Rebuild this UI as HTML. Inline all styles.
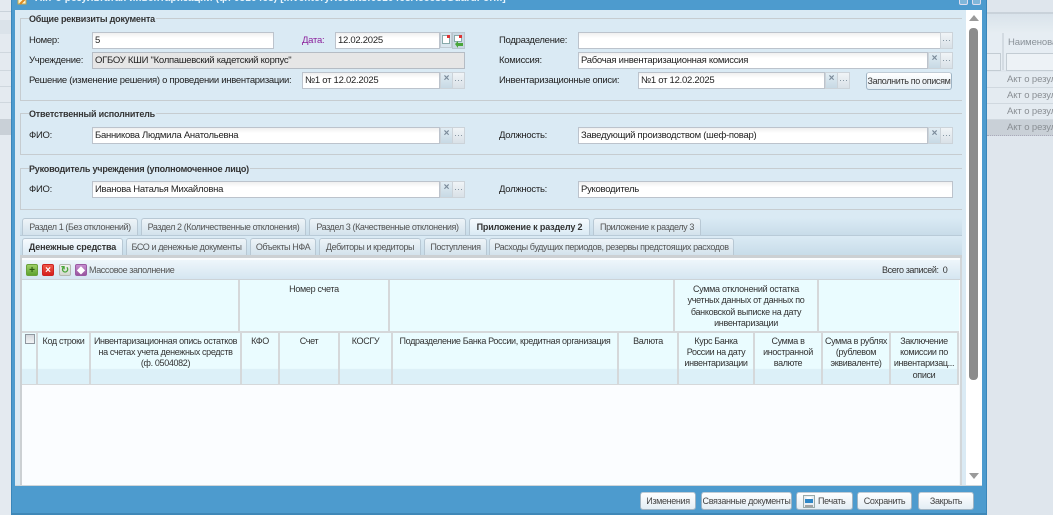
<!DOCTYPE html>
<html lang="ru"><head><meta charset="utf-8"><title>Акт</title>
<style>
html,body{margin:0;padding:0}
body{width:1053px;height:515px;overflow:hidden;position:relative;background:#dfe6ed;font:9.5px "Liberation Sans",sans-serif;letter-spacing:-.27px;color:#222}
.a{position:absolute;box-sizing:border-box}
.t{position:absolute;white-space:nowrap;line-height:12px}
.fs{position:absolute;box-sizing:border-box;border:1px solid #c6ccd0;left:20px;width:943px}
.lg{position:absolute;left:29px;font-weight:bold;white-space:nowrap;background:#daeaf4;padding-right:1px;line-height:12px;color:#333;font-size:9px;letter-spacing:-.2px}
.i{position:absolute;box-sizing:border-box;background:linear-gradient(#f0f0f0,#fff 5px);border:1px solid #bcc3cc;padding-left:2px;line-height:16px;height:17px;white-space:nowrap;color:#222}
.x,.d{position:absolute;box-sizing:border-box;height:17px;width:13px;border:1px solid #ccd3d9;text-align:center;line-height:12px;font-size:10px;color:#7a8a99;letter-spacing:0}
.x{background:linear-gradient(#e2edf4,#c7d9e5);font-weight:bold}
.d{background:linear-gradient(#f0f4f7,#d9e1e8);font-size:9px;line-height:14px}
.tab{position:absolute;box-sizing:border-box;height:17px;border:1px solid #b8c8d4;border-bottom:0;border-radius:3px 3px 0 0;background:linear-gradient(#eef4f8,#d3e2ec);text-align:center;line-height:16px;color:#555;white-space:nowrap;font-size:9px;letter-spacing:-.4px}
.on{background:linear-gradient(#f6fbfe,#daeaf4);font-weight:bold;color:#333;letter-spacing:-.15px}
.btn{position:absolute;box-sizing:border-box;top:492px;height:18px;border:1px solid #9fb4c4;border-top-color:#c0ccd6;border-radius:3px;background:linear-gradient(#fff,#e3edf4);text-align:center;line-height:16px;color:#444;white-space:nowrap;font-size:9px;letter-spacing:-.35px}
.h{position:absolute;box-sizing:border-box;top:333px;height:52px;border-right:2px solid #d5d8da;background:linear-gradient(#eafcff 68%,#dcf0f8 70%);text-align:center;line-height:11.2px;padding:3px 0 0;color:#333;white-space:nowrap;font-size:9px;letter-spacing:-.35px}
.g{position:absolute;box-sizing:border-box;top:280px;height:52px;border-right:2px solid #d5d8da;background:#eafcff;text-align:center;line-height:11.4px;padding-top:4px;color:#333;white-space:nowrap;font-size:9px;letter-spacing:-.3px}
.ic{position:absolute;top:264px;width:12px;height:12px;border-radius:2px;box-sizing:border-box;color:#fff;text-align:center;line-height:11px;font-size:10px;font-weight:bold;letter-spacing:0}
.r{position:absolute;left:987px;width:66px;height:16px;border-bottom:1px solid #d0d8df;background:#e4ebf1;color:#8a8f94;padding:2px 0 0 20px;box-sizing:border-box;white-space:nowrap;line-height:12px;letter-spacing:-.1px}
</style></head><body>

<!-- backdrop left -->
<div class="a" style="left:0;top:0;width:11px;height:515px;background:#e4eaf0"></div>
<div class="a" style="left:0;top:11px;width:11px;height:1px;background:#c9d2da"></div>
<div class="a" style="left:0;top:20px;width:11px;height:14px;background:#dbe3ea"></div>
<div class="a" style="left:0;top:52px;width:11px;height:1px;background:#cfd7de"></div>
<div class="a" style="left:0;top:70px;width:11px;height:1px;background:#cfd7de"></div>
<div class="a" style="left:0;top:86px;width:11px;height:1px;background:#cfd7de"></div>
<div class="a" style="left:0;top:102px;width:11px;height:1px;background:#cfd7de"></div>
<div class="a" style="left:0;top:119px;width:11px;height:16px;background:#c9d0d7"></div>

<!-- backdrop right -->
<div class="a" style="left:987px;top:12px;width:66px;height:2px;background:#c9d2da"></div>
<div class="a" style="left:987px;top:14px;width:66px;height:19px;background:linear-gradient(#d9e3eb,#e6edf2)"></div>
<div class="a" style="left:987px;top:33px;width:66px;height:37px;background:#e6edf3"></div>
<div class="a" style="left:1002px;top:33px;width:2px;height:37px;background:#d3dbe2"></div>
<div class="t" style="left:1008px;top:37px;color:#8a9299;letter-spacing:-.1px">Наименован</div>
<div class="a" style="left:987px;top:53px;width:14px;height:18px;border:1px solid #c3ccd3;border-left:0;background:#e8eef3"></div>
<div class="a" style="left:1006px;top:53px;width:47px;height:18px;border:1px solid #c3ccd3;border-right:0;background:#edf2f6"></div>
<div class="r" style="top:72px">Акт о резул</div>
<div class="r" style="top:88px">Акт о резул</div>
<div class="r" style="top:104px">Акт о резул</div>
<div class="r" style="top:120px;background:#c9d0d7;border-bottom:1px dotted #aab">Акт о резул</div>

<!-- window -->
<div class="a" style="left:11px;top:0;width:976px;height:515px;background:#4d9bce;border-left:1px solid #3a86ba;border-right:1px solid #3a86ba"></div>
<div class="a" style="left:15px;top:10px;width:967px;height:475px;background:#daeaf4"></div>
<div class="a" style="left:966px;top:10px;width:16px;height:475px;background:#fff"></div>
<div class="a" style="left:15px;top:485px;width:967px;height:1px;background:#d0d6da"></div>
<div class="a" style="left:12px;top:513px;width:974px;height:2px;background:#3f88b8"></div>

<!-- title -->
<svg class="a" style="left:17px;top:0" width="11" height="6"><rect x="1" y="-6" width="8" height="10" fill="#fff6d0" stroke="#c9a648"/><path d="M3 4L9-2" stroke="#e08a20" stroke-width="2"/></svg>
<div class="t" style="left:35px;top:-7px;font-weight:bold;color:#e9f4fb;font-size:10px;letter-spacing:.15px">Акт о результатах инвентаризации (ф. 0510463) [InventoryResultsf0510463AccessGuardForm]</div>
<div class="a" style="left:959px;top:-4px;width:9px;height:9px;border:1px solid #dde;border-radius:2px;background:#7fb6da"></div>
<div class="a" style="left:972px;top:-4px;width:9px;height:9px;border:1px solid #dde;border-radius:2px;background:#7fb6da"></div>

<!-- fieldsets -->
<div class="fs" style="top:18px;height:83px"></div>
<div class="lg" style="top:13px">Общие реквизиты документа</div>
<div class="fs" style="top:113px;height:42px"></div>
<div class="lg" style="top:108px">Ответственный исполнитель</div>
<div class="fs" style="top:168px;height:42px"></div>
<div class="lg" style="top:163px">Руководитель учреждения (уполномоченное лицо)</div>

<!-- block 1 -->
<div class="t" style="left:29px;top:35px">Номер:</div>
<div class="i" style="left:92px;top:32px;width:182px">5</div>
<div class="t" style="left:302px;top:35px;color:#8b1f9b">Дата:</div>
<div class="i" style="left:335px;top:32px;width:105px">12.02.2025</div>
<svg class="a" style="left:440px;top:32px" width="25" height="17"><rect x=".5" y=".5" width="11" height="15" fill="#d9e6ee" stroke="#c0cbd3"/><rect x="2.500" y="3.500" width="7" height="8" fill="#fff" stroke="#8aa"/><rect x="7" y="3" width="3" height="3" fill="#d33"/><rect x="12.500" y=".5" width="12" height="16" fill="#c9d8e2" stroke="#b8c5ce"/><rect x="14.500" y="3.500" width="7" height="6" fill="#fff" stroke="#8aa"/><rect x="19" y="3" width="3" height="3" fill="#d33"/><path d="M15 12l3-3v2h5v3h-5v2z" fill="#4aa63a"/></svg>

<div class="t" style="left:29px;top:55px">Учреждение:</div>
<div class="i" style="left:92px;top:52px;width:373px;background:#e6e6e6;border-color:#b5bcc4">ОГБОУ КШИ "Колпашевский кадетский корпус"</div>

<div class="t" style="left:29px;top:75px;letter-spacing:-.29px">Решение (изменение решения) о проведении инвентаризации:</div>
<div class="i" style="left:302px;top:72px;width:138px">№1 от 12.02.2025</div>
<div class="x" style="left:440px;top:72px">×</div><div class="d" style="left:452px;top:72px">···</div>

<div class="t" style="left:499px;top:35px">Подразделение:</div>
<div class="i" style="left:578px;top:32px;width:363px"></div>
<div class="d" style="left:940px;top:32px">···</div>

<div class="t" style="left:499px;top:55px">Комиссия:</div>
<div class="i" style="left:578px;top:52px;width:350px">Рабочая инвентаризационная комиссия</div>
<div class="x" style="left:928px;top:52px">×</div><div class="d" style="left:940px;top:52px">···</div>

<div class="t" style="left:499px;top:75px">Инвентаризационные описи:</div>
<div class="i" style="left:638px;top:72px;width:187px">№1 от 12.02.2025</div>
<div class="x" style="left:825px;top:72px">×</div><div class="d" style="left:837px;top:72px">···</div>
<div class="btn" style="left:866px;top:72px;width:86px;height:18px;color:#333;letter-spacing:-.35px">Заполнить по описям</div>

<!-- block 2 -->
<div class="t" style="left:29px;top:130px">ФИО:</div>
<div class="i" style="left:92px;top:127px;width:348px">Банникова Людмила Анатольевна</div>
<div class="x" style="left:440px;top:127px">×</div><div class="d" style="left:452px;top:127px">···</div>
<div class="t" style="left:499px;top:130px">Должность:</div>
<div class="i" style="left:578px;top:127px;width:350px">Заведующий производством (шеф-повар)</div>
<div class="x" style="left:928px;top:127px">×</div><div class="d" style="left:940px;top:127px">···</div>

<!-- block 3 -->
<div class="t" style="left:29px;top:184px">ФИО:</div>
<div class="i" style="left:92px;top:181px;width:348px">Иванова Наталья Михайловна</div>
<div class="x" style="left:440px;top:181px">×</div><div class="d" style="left:452px;top:181px">···</div>
<div class="t" style="left:499px;top:184px">Должность:</div>
<div class="i" style="left:578px;top:181px;width:375px">Руководитель</div>

<!-- tabs -->
<div class="a" style="left:20px;top:218px;width:943px;height:18px;background:linear-gradient(#daeaf4,#c8dce9);border-bottom:1px solid #b9cbd8"></div>
<div class="tab" style="left:22px;top:218px;width:116px">Раздел 1 (Без отклонений)</div>
<div class="tab" style="left:141px;top:218px;width:165px">Раздел 2 (Количественные отклонения)</div>
<div class="tab" style="left:309px;top:218px;width:157px">Раздел 3 (Качественные отклонения)</div>
<div class="tab on" style="left:469px;top:218px;width:121px">Приложение к разделу 2</div>
<div class="tab" style="left:593px;top:218px;width:108px">Приложение к разделу 3</div>

<div class="a" style="left:20px;top:237px;width:943px;height:18px;background:linear-gradient(#daeaf4,#c8dce9)"></div>
<div class="tab on" style="left:22px;top:238px;width:101px;height:18px">Денежные средства</div>
<div class="tab" style="left:126px;top:238px;width:121px">БСО и денежные документы</div>
<div class="tab" style="left:250px;top:238px;width:66px">Объекты НФА</div>
<div class="tab" style="left:319px;top:238px;width:102px">Дебиторы и кредиторы</div>
<div class="tab" style="left:424px;top:238px;width:63px">Поступления</div>
<div class="tab" style="left:489px;top:238px;width:245px">Расходы будущих периодов, резервы предстоящих расходов</div>

<!-- grid -->
<div class="a" style="left:20px;top:255px;width:943px;height:230px;background:#fbfdff;border:2px solid #ccd0d3;border-top-width:3px;border-bottom:0;border-right-width:1px"></div>
<div class="a" style="left:22px;top:260px;width:940px;height:19px;background:linear-gradient(#eef6fb,#d5e6f1)"></div>
<div class="a" style="left:22px;top:279px;width:940px;height:1px;background:#ccd3d8"></div>
<div class="ic" style="left:26px;background:linear-gradient(#9fd069,#5ea32f);border:1px solid #6aa13a;color:#2e5a12">+</div>
<div class="ic" style="left:42px;background:linear-gradient(#f05a4a,#d4201c);border:1px solid #c22">×</div>
<div class="ic" style="left:59px;background:linear-gradient(#f0f2ee,#d3d8cf);border:1px solid #b5b9b2;color:#4aa63a">↻</div>
<div class="ic" style="left:75px;background:linear-gradient(#c78fd1,#99569f);border:1px solid #9a5aa3">◆</div>
<div class="t" style="left:89px;top:264px;color:#555;font-size:9px;letter-spacing:-.4px">Массовое заполнение</div>
<div class="t" style="left:882px;top:264px;color:#333;font-size:9px;letter-spacing:-.4px">Всего записей:&nbsp; 0</div>

<div class="g" style="left:22px;width:218px"></div>
<div class="g" style="left:240px;width:150px">Номер счета</div>
<div class="g" style="left:390px;width:285px"></div>
<div class="g" style="left:675px;width:144px">Сумма отклонений остатка<br>учетных данных от данных по<br>банковской выписке на дату<br>инвентаризации</div>
<div class="g" style="left:819px;width:140px;border-right:0"></div>
<div class="a" style="left:22px;top:331px;width:937px;height:2px;background:#d5d8da"></div>

<div class="h" style="left:22px;width:16px"></div>
<div class="a" style="left:25px;top:334px;width:10px;height:10px;background:linear-gradient(#d5d9de,#f2f4f6);border:1px solid #8f979f"></div>
<div class="h" style="left:38px;width:53px">Код строки</div>
<div class="h" style="left:91px;width:151px">Инвентаризационная опись остатков<br>на счетах учета денежных средств<br>(ф. 0504082)</div>
<div class="h" style="left:242px;width:38px">КФО</div>
<div class="h" style="left:280px;width:60px">Счет</div>
<div class="h" style="left:340px;width:53px">КОСГУ</div>
<div class="h" style="left:393px;width:226px">Подразделение Банка России, кредитная организация</div>
<div class="h" style="left:619px;width:60px">Валюта</div>
<div class="h" style="left:679px;width:76px">Курс Банка<br>России на дату<br>инвентаризации</div>
<div class="h" style="left:755px;width:68px">Сумма в<br>иностранной<br>валюте</div>
<div class="h" style="left:823px;width:68px">Сумма в рублях<br>(рублевом<br>эквиваленте)</div>
<div class="h" style="left:891px;width:68px">Заключение<br>комиссии по<br>инвентаризац...<br>описи</div>
<div class="a" style="left:22px;top:384px;width:937px;height:1px;background:#d5d8da"></div>
<div class="a" style="left:959px;top:333px;width:3px;height:152px;background:#f4f7f9"></div>
<div class="a" style="left:960px;top:258px;width:2px;height:227px;background:#d2d6d9"></div>
<div class="a" style="left:962px;top:10px;width:4px;height:475px;background:#daeaf4"></div>

<!-- scrollbar -->
<svg class="a" style="left:966px;top:10px" width="16" height="475"><path d="M8 5l5 6H3z" fill="#9a9a9a"/><rect x="3" y="18" width="9" height="352" rx="4" fill="#8c8c8c"/><path d="M3 463h10l-5 6z" fill="#9a9a9a"/></svg>

<!-- buttons -->
<div class="btn" style="left:640px;width:56px">Изменения</div>
<div class="btn" style="left:701px;width:91px">Связанные документы</div>
<div class="btn" style="left:796px;width:57px;padding-left:21px;text-align:left">Печать</div>
<svg class="a" style="left:803px;top:495px" width="13" height="13"><rect x=".5" y=".5" width="11" height="12" fill="#e9eef2" stroke="#9aa"/><rect x="2" y="4" width="8" height="4" fill="#2f86c6"/><rect x="3.500" y="2" width="5" height="2" fill="#fff"/><path d="M2 11h8" stroke="#555"/></svg>
<div class="btn" style="left:857px;width:55px">Сохранить</div>
<div class="btn" style="left:918px;width:56px">Закрыть</div>
</body></html>
